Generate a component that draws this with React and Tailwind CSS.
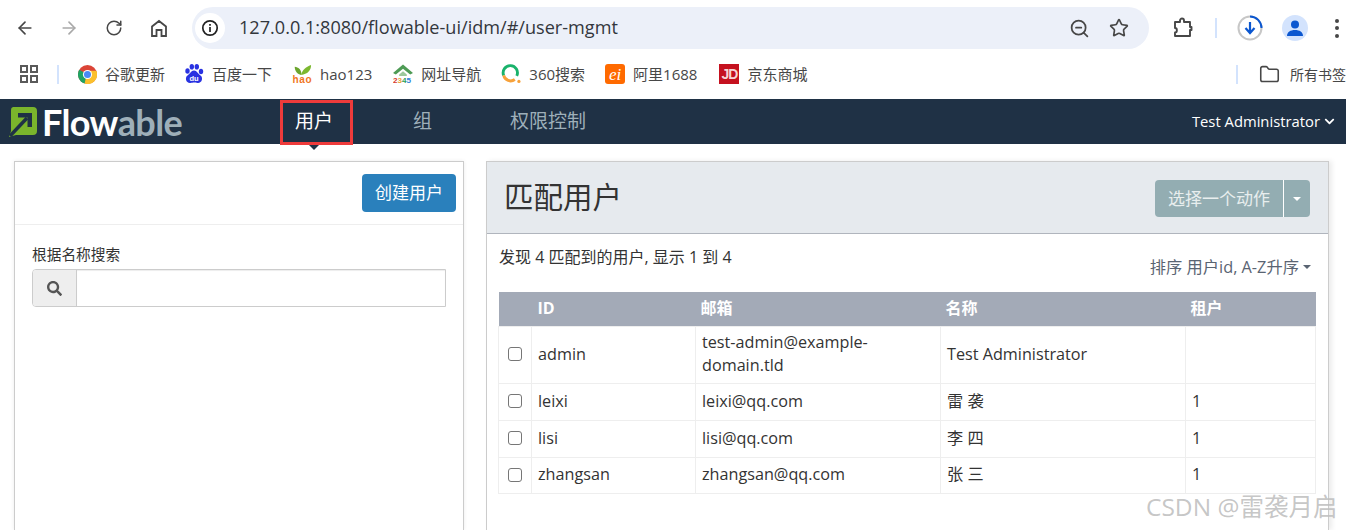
import React from "react";
import { ArrowLeft, ArrowRight, RotateCw, ZoomOut, Star, Folder } from "lucide-react";
import { FaSearch, FaChevronDown } from "react-icons/fa";

const sans = { fontFamily: '"Open Sans","Noto Sans CJK SC",sans-serif' };

function Bookmark({ icon, label, className }) {
  return (
    <div className={"flex items-center gap-[8px] text-[15px] text-[#474747] " + (className || "")}>
      <span className="flex h-5 w-5 items-center justify-center">{icon}</span>
      <span>{label}</span>
    </div>
  );
}

const ChromeLogo = () => (
  <svg width="19" height="19" viewBox="0 0 20 20">
    <circle cx="10" cy="10" r="10" fill="#db4437" />
    <path d="M10 10 L1.3 5 A10 10 0 0 0 7 19.5 Z" fill="#1fa463" />
    <path d="M10 6 L19.3 6 A10 10 0 0 1 7 19.5 Z" fill="#fbc02d" />
    <circle cx="10" cy="10" r="4.8" fill="#fff" />
    <circle cx="10" cy="10" r="3.7" fill="#4a8af4" />
  </svg>
);

const BaiduLogo = () => (
  <svg width="20" height="20" viewBox="0 0 20 20">
    <g fill="#2932e1">
      <ellipse cx="3.500" cy="7" rx="2.200" ry="2.800" />
      <ellipse cx="7.800" cy="2.800" rx="2.200" ry="2.800" />
      <ellipse cx="12.800" cy="2.800" rx="2.200" ry="2.800" />
      <ellipse cx="17" cy="7.500" rx="2.200" ry="2.800" />
      <path d="M10 6.500c3 0 4 3.500 6.500 5 3 2 1.500 8-3 7.500-1.500-.2-2.500-.5-3.500-.5s-2 .3-3.500.5c-4.500.5-6-5.500-3-7.500 2.500-1.500 3.500-5 6.500-5z" />
    </g>
    <text x="10" y="17" textAnchor="middle" fontSize="7.500" fontWeight="700" fill="#fff" fontFamily="Liberation Sans">du</text>
  </svg>
);

const HaoLogo = () => (
  <svg width="22" height="20" viewBox="0 0 22 20">
    <path d="M10 11C6 10 3 7 3 2c4 .5 7 3 7.500 8z" fill="#6ba52d" />
    <path d="M10 11C11 6 15 2 21 0c0 6-4 10-11 11z" fill="#7cb82f" />
    <text x="11" y="19.500" textAnchor="middle" fontSize="11" fontWeight="700" fill="#f0761e" fontFamily="Liberation Sans" textLength="21">hao</text>
  </svg>
);

const Logo2345 = () => (
  <svg width="21" height="20" viewBox="0 0 21 20">
    <path d="M10.500 0 L21 9 L18 10.500 L10.500 4.500 L3 10.500 L0 9z" fill="#4e9b55" />
    <path d="M6.500 10.500 L10.500 7 L14.500 10.500 L14.500 12 L6.500 12z" fill="#9cc89c" />
    <text x="0" y="19.500" fontSize="8.500" fontWeight="700" fontFamily="Liberation Sans">
      <tspan fill="#d63a2f">2</tspan>
      <tspan fill="#e8a33a">3</tspan>
      <tspan fill="#2f9e5a">4</tspan>
      <tspan fill="#2f7fd6">5</tspan>
    </text>
  </svg>
);

const Logo360 = () => (
  <svg width="21" height="20" viewBox="0 0 21 20" fill="none">
    <path d="M2.800 11.500A7.500 7.500 0 1 1 16.500 12" stroke="#19b26b" strokeWidth="3" />
    <path d="M2.800 11.500A7.500 7.500 0 0 0 14.500 15.800" stroke="#f7a13a" strokeWidth="3" />
    <circle cx="18.800" cy="17.800" r="1.700" fill="#f7a13a" />
  </svg>
);

const AliLogo = () => (
  <span className="flex h-5 w-5 items-center justify-center rounded-[3px] bg-[#ff6a00] text-[17px] italic leading-none text-white" style={{ fontFamily: '"Liberation Serif",serif' }}>
    ei
  </span>
);

const JdLogo = () => (
  <span className="flex h-5 w-5 items-center justify-center bg-[#c5111f] text-[14px] font-bold leading-none tracking-[-1px] text-[#f6d5d5]" style={{ fontFamily: '"Liberation Sans",sans-serif' }}>
    JD
  </span>
);

const rows = [
  { id: "admin", mail: "test-admin@example-domain.tld", name: "Test Administrator", t: "", h: "h-[57px]" },
  { id: "leixi", mail: "leixi@qq.com", name: "雷 袭", t: "1", h: "h-[37px]" },
  { id: "lisi", mail: "lisi@qq.com", name: "李 四", t: "1", h: "h-[37px]" },
  { id: "zhangsan", mail: "zhangsan@qq.com", name: "张 三", t: "1", h: "h-[36px]" },
];

export default function App() {
  return (
    <div className="relative flex h-[530px] w-[1347px] flex-col overflow-hidden bg-white" style={sans}>
      {/* browser toolbar */}
      <div className="flex h-[54px] items-center pt-[2px]">
        <div className="flex w-[192px] items-center text-[#474747]">
          <ArrowLeft size={20} strokeWidth={2} className="ml-[15px]" />
          <ArrowRight size={20} strokeWidth={2} className="ml-[24px] text-[#a9a9a9]" />
          <RotateCw size={18} strokeWidth={2} className="ml-[26px]" />
          <svg width="18" height="19" viewBox="0 0 18 19" fill="none" stroke="#474747" strokeWidth="1.800" className="ml-[27px]">
            <path d="M2 17V7.500L9 2l7 5.500V17h-4.500v-6h-5v6z" />
          </svg>
        </div>
        <div className="flex h-[42px] w-[957px] items-center rounded-full bg-[#ecf0f9] pl-[3px] pr-[20px]">
          <span className="flex h-[30px] w-[30px] items-center justify-center rounded-full bg-white">
            <svg width="18" height="18" viewBox="0 0 18 18" fill="none" stroke="#222" strokeWidth="1.700">
              <circle cx="9" cy="9" r="7.200" />
              <path d="M9 8v5M9 5v1.700" />
            </svg>
          </span>
          <span className="ml-[14px] flex-1 text-[18.100px] text-[#33373d]">127.0.0.1:8080/flowable-ui/idm/#/user-mgmt</span>
          <ZoomOut size={21} strokeWidth={2} className="text-[#474747]" />
          <Star size={20} strokeWidth={2} className="ml-[19px] text-[#474747]" />
        </div>
        <div className="flex flex-1 items-center">
          <svg width="22" height="22" viewBox="0 0 22 22" fill="none" stroke="#474747" strokeWidth="1.900" className="ml-[23px]">
            <path d="M3 5h5V3.500a2 2 0 0 1 4 0V5h6v5h1.500v3H18v6H3v-3.500c2.500 0 2.500-4.500 0-4.500z" strokeLinejoin="round" />
          </svg>
          <span className="ml-[21px] h-[20px] w-[2px] bg-[#d3e3fd]" />
          <span className="ml-[20px] flex h-[26px] w-[26px] items-center justify-center">
            <svg width="26" height="26" viewBox="0 0 26 26" fill="none">
              <circle cx="13" cy="13" r="11.500" stroke="#c7c7c7" strokeWidth="2" />
              <path d="M13 1.500A11.500 11.500 0 0 1 24.500 13" stroke="#0b57d0" strokeWidth="2" />
              <path d="M13 7v11M8.500 13l4.500 5 4.500-5" stroke="#0b57d0" strokeWidth="2.200" />
            </svg>
          </span>
          <span className="ml-[19px] flex h-[26px] w-[26px] items-center justify-center rounded-full bg-[#d3e3fd]">
            <svg width="18" height="18" viewBox="0 0 18 18" fill="#0b57d0">
              <circle cx="9" cy="5.500" r="4" />
              <path d="M1 17c0-4 3.500-6 8-6s8 2 8 6z" />
            </svg>
          </span>
          <span className="ml-[27px] flex flex-col gap-[3.500px]">
            <i className="h-[4px] w-[4px] rounded-full bg-[#474747]" />
            <i className="h-[4px] w-[4px] rounded-full bg-[#474747]" />
            <i className="h-[4px] w-[4px] rounded-full bg-[#474747]" />
          </span>
        </div>
      </div>

      {/* bookmarks */}
      <div className="flex h-[45px] items-center pb-[5px]">
        <svg width="18" height="18" viewBox="0 0 18 18" fill="none" stroke="#5a5a5a" strokeWidth="2" className="ml-[20px]">
          <rect x="1" y="1" width="6" height="6" />
          <rect x="11" y="1" width="6" height="6" />
          <rect x="1" y="11" width="6" height="6" />
          <rect x="11" y="11" width="6" height="6" />
        </svg>
        <span className="ml-[19px] h-[19px] w-[2px] bg-[#d3e3fd]" />
        <Bookmark className="ml-[18px]" icon={<ChromeLogo />} label="谷歌更新" />
        <Bookmark className="ml-[19px]" icon={<BaiduLogo />} label="百度一下" />
        <Bookmark className="ml-[20px]" icon={<HaoLogo />} label="hao123" />
        <Bookmark className="ml-[21px]" icon={<Logo2345 />} label="网址导航" />
        <Bookmark className="ml-[20px]" icon={<Logo360 />} label="360搜索" />
        <Bookmark className="ml-[20px]" icon={<AliLogo />} label="阿里1688" />
        <Bookmark className="ml-[22px]" icon={<JdLogo />} label="京东商城" />
        <span className="ml-auto h-[19px] w-[2px] bg-[#d3e3fd]" />
        <Folder size={21} strokeWidth={1.800} className="ml-[21px] text-[#474747]" />
        <span className="ml-[10px] mr-[1px] whitespace-nowrap text-[14px] text-[#474747]">所有书签</span>
      </div>

      {/* app nav */}
      <nav className="relative flex h-[45px] w-[1346px] items-center bg-[#1f3145]">
        <div className="ml-[9px] flex h-full w-[271px] items-center">
          <svg width="28" height="30" viewBox="0 0 28 30" className="shrink-0">
            <path d="M4 0h20a4 4 0 0 1 4 4v20a4 4 0 0 1-4 4H7l-7 2 2-6V3a3 3 0 0 1 2-3z" fill="#7ab52c" />
            <path d="M1 29 L18 11" stroke="#1f3145" strokeWidth="3.500" />
            <path d="M9 6h14v14h-4.500v-9.500H9z" fill="#1f3145" />
          </svg>
          <span className="ml-[5px] text-[36px] font-bold leading-none tracking-[-0.600px]" style={{ fontFamily: '"Lato",sans-serif' }}>
            <span className="text-white">Flow</span>
            <span className="text-[#9eafb9]">able</span>
          </span>
        </div>
        <div className="relative flex h-full w-[73px] items-center justify-center pr-[5px] text-[19px] text-white">
          用户
          <span className="absolute bottom-[-6px] left-[29px] h-0 w-0 border-x-[5px] border-t-[5px] border-x-transparent border-t-[#1f3145]" />
        </div>
        <span className="ml-[60px] text-[19px] text-[#9eafb9]">组</span>
        <span className="ml-[78px] text-[19px] text-[#9eafb9]">权限控制</span>
        <div className="ml-auto mr-[11px] flex items-center gap-[4px] text-[14.800px] text-white">
          Test Administrator
          <FaChevronDown size={11} />
        </div>
        <div className="pointer-events-none absolute left-[280px] top-[1px] h-[45px] w-[73px] border-[3px] border-[#ee3b3b]" />
      </nav>

      {/* content */}
      <main className="flex min-h-0 flex-1 items-stretch pl-[14px] pt-[17px] text-[#333]">
        <aside className="w-[450px] border-x border-t border-[#ccc] shadow-[0_0_4px_rgba(0,0,0,0.08)]">
          <div className="flex h-[63px] items-start justify-end border-b border-[#eee] pr-[7px] pt-[12px]">
            <button className="h-[38px] w-[94px] rounded-[4px] bg-[#2a80bc] text-[17px] text-white">创建用户</button>
          </div>
          <div className="px-[17px] pt-[20px]">
            <label className="block text-[14.700px] leading-[18px] text-[#333]">根据名称搜索</label>
            <div className="mt-[6px] flex h-[38px] w-[414px] rounded-l-[4px] border border-[#ccc]">
              <span className="flex w-[44px] items-center justify-center rounded-l-[3px] border-r border-[#ccc] bg-[#eee] text-[#555]">
                <FaSearch size={15} />
              </span>
              <span className="flex-1 shadow-[inset_0_1px_1px_rgba(0,0,0,0.075)]" />
            </div>
          </div>
        </aside>

        <section className="ml-[22px] flex w-[843px] flex-col border-x border-t border-[#ccc] shadow-[3px_0_5px_rgba(0,0,0,0.08)]">
          <header className="flex h-[72px] items-start justify-between border-b border-[#b0b5bd] bg-[#e6eaee] pl-[17px] pr-[18px]">
            <h1 className="mt-[14px] text-[29.500px] font-normal leading-[42px] text-[#333]">匹配用户</h1>
            <div className="mt-[18px] flex h-[37px] rounded-[4px] bg-[#93adb2] text-[17px] text-[#e8eeee]">
              <span className="flex w-[129px] items-center justify-center border-r border-white pt-[1px]">选择一个动作</span>
              <span className="flex w-[26px] items-center justify-center">
                <span className="h-0 w-0 border-x-[4px] border-t-[4px] border-x-transparent border-t-white" />
              </span>
            </div>
          </header>
          <div className="px-[12px]">
            <div className="flex h-[58px] items-start justify-between">
              <span className="mt-[12px] text-[16px] leading-[22px] text-[#333]">发现 4 匹配到的用户, 显示 1 到 4</span>
              <span className="mr-[5px] mt-[22px] flex items-center gap-[4px] text-[16.300px] leading-[22px] text-[#5a6472]">
                排序 用户id, A-Z升序
                <span className="h-0 w-0 border-x-[4px] border-t-[4px] border-x-transparent border-t-[#5a6472]" />
              </span>
            </div>
            <table className="-ml-px w-[817px] table-fixed border-collapse text-[16.200px] text-[#333]">
              <colgroup>
                <col className="w-[33px]" />
                <col className="w-[164px]" />
                <col className="w-[245px]" />
                <col className="w-[245px]" />
                <col className="w-[130px]" />
              </colgroup>
              <thead>
                <tr className="h-[34px] bg-[#a3aab7] text-left text-[16px] font-bold text-white">
                  <th />
                  <th className="pb-[1px] pl-[6px]">ID</th>
                  <th className="pb-[1px] pl-[5px]">邮箱</th>
                  <th className="pb-[1px] pl-[5px]">名称</th>
                  <th className="pb-[1px] pl-[5px]">租户</th>
                </tr>
              </thead>
              <tbody>
                {rows.map((r) => (
                  <tr key={r.id} className={r.h}>
                    <td className="border border-[#eee] pb-[2px] text-center">
                      <span className="inline-block h-[14px] w-[14px] -translate-y-[1px] rounded-[3px] border border-[#767676] bg-white align-middle" />
                    </td>
                    <td className="border border-[#eee] pb-[1px] pl-[6px]">{r.id}</td>
                    <td className="border border-[#eee] pb-[1px] pl-[6px] pr-[5px] leading-[23px]">{r.mail}</td>
                    <td className="border border-[#eee] pb-[1px] pl-[6px]">{r.name}</td>
                    <td className="border border-[#eee] pb-[1px] pl-[6px]">{r.t}</td>
                  </tr>
                ))}
              </tbody>
            </table>
          </div>
        </section>
      </main>

      <div className="absolute left-[1146px] top-[491px] text-[24.500px] leading-[32px] text-[#bfbfbf]/90">CSDN @雷袭月启</div>
    </div>
  );
}
